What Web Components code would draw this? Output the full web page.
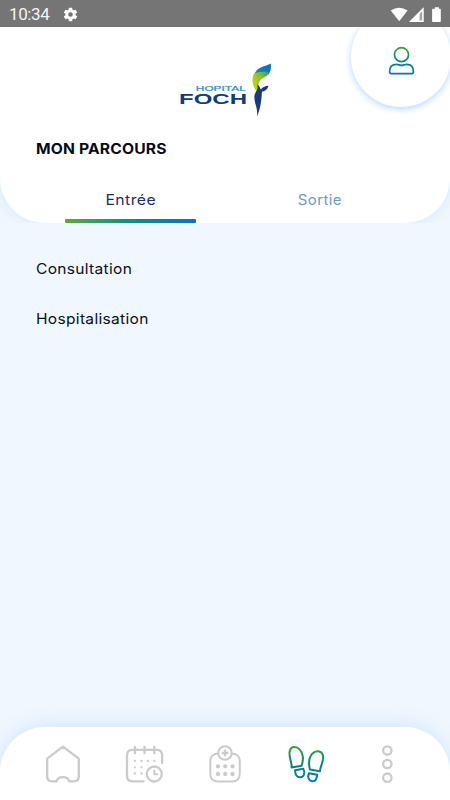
<!DOCTYPE html>
<html lang="fr">
<head>
<meta charset="utf-8">
<title>Mon parcours</title>
<style>
html,body{margin:0;height:100%}
body{font-family:Inter,"Open Sans",sans-serif;background:#f0f7fe;overflow:hidden}
</style>
</head>
<body>
<parcours-app></parcours-app>
<script>
const define = (name, html) => customElements.define(name, class extends HTMLElement {
  constructor() {
    super();
    const t = document.createElement('template');
    t.innerHTML = html;
    this.attachShadow({mode: 'open'}).append(t.content.cloneNode(true));
  }
});

define('status-bar', `
<style>
:host{display:flex;box-sizing:border-box;height:27px;background:#757575;color:#fff;align-items:center;padding:2px 8px 0 9px;font:17px/25px Roboto,sans-serif;position:relative;z-index:3}
span{letter-spacing:-.4px;width:52.500px;color:#f4f4f4}
.gap{flex:1}
svg{display:block}
</style>
<span>10:34</span>
<svg width="17" height="17" viewBox="0 0 24 24"><path fill="#fff" d="M19.14 12.94c.04-.3.06-.61.06-.94s-.02-.64-.07-.94l2.03-1.58a.49.49 0 0 0 .12-.61l-1.92-3.32a.49.49 0 0 0-.59-.22l-2.39.96a7 7 0 0 0-1.62-.94l-.36-2.54A.48.48 0 0 0 13.92 2.4h-3.84a.48.48 0 0 0-.48.41l-.36 2.54c-.59.24-1.13.57-1.62.94l-2.39-.96a.48.48 0 0 0-.59.22L2.72 8.87a.48.48 0 0 0 .12.61l2.03 1.58a7 7 0 0 0 0 1.88l-2.03 1.58a.49.49 0 0 0-.12.61l1.92 3.32c.12.22.37.29.59.22l2.39-.96c.5.38 1.03.7 1.62.94l.36 2.54c.05.24.24.41.48.41h3.84c.24 0 .44-.17.47-.41l.36-2.54a6.8 6.8 0 0 0 1.62-.94l2.39.96c.22.08.47 0 .59-.22l1.92-3.32a.48.48 0 0 0-.12-.61zM12 15.3a3.3 3.3 0 1 1 0-6.6 3.3 3.3 0 0 1 0 6.6z"/></svg>
<i class="gap"></i>
<svg width="52" height="16" viewBox="0 0 52 16"><path fill="#fff" d="M.8 3.6Q9 -2.2 17.6 3.6L9.2 14.2Z"/><path fill="#a5a5a5" d="M33.5.8V14.8H19.5Z"/><path fill="#fff" fill-rule="evenodd" d="M33.7.3V15H19Zm-1.5 4V13.5H29.6V6.9Z"/><path fill="#fff" d="M42.900 1.7h2V.2h4v1.5h1.2q.7 0 .7.7v11.8q0 .8-.7.8h-7.2q-.8 0-.8-.8V2.4q0-.7.8-.7z"/></svg>
`);

define('foch-logo', `
<style>:host{display:block;width:96px;height:56px}svg{display:block}text{font-family:"Liberation Sans",sans-serif}</style>
<svg width="96" height="56" viewBox="178 61.800 96 56">
<defs><linearGradient id="g" gradientUnits="userSpaceOnUse" x1="252" y1="82" x2="268" y2="72"><stop stop-color="#c3d60c"/><stop offset=".5" stop-color="#8dc32d"/><stop offset="1" stop-color="#39a35c"/></linearGradient>
<linearGradient id="b" gradientUnits="userSpaceOnUse" x1="254" y1="75" x2="269" y2="65"><stop stop-color="#0f9a9a"/><stop offset=".45" stop-color="#0c7fc4"/><stop offset="1" stop-color="#0870bb"/></linearGradient></defs>
<text x="195.800" y="91" font-size="6.900" fill="#238fc9" stroke="#238fc9" stroke-width=".2" textLength="50" lengthAdjust="spacingAndGlyphs">HOPITAL</text>
<text x="179" y="103.700" font-size="14" font-weight="bold" fill="#103b80" textLength="68" lengthAdjust="spacingAndGlyphs">FOCH</text>
<path fill="url(#b)" d="M270.700 63.300C265 66.500 259.500 66.300 256 71C254 73.500 253.300 76 253 78C258 76.500 261 78 268.500 74C271 71.500 271.200 67.500 270.700 63.300Z"/>
<path fill="url(#g)" d="M254.200 73.600C258.500 71 260.500 72 265 71.200C267.500 71 269 72.200 268.500 74C266.500 76.500 262 77.700 260.300 80C257.700 83.500 258.300 87.500 256.700 91C252.200 86.500 251.200 78.500 254.200 73.600Z"/>
<path fill="#173b7c" d="M257.200 83.800C259.500 86 260.300 87.500 260.700 89.300C263 86.500 265.500 85.800 268.400 85.500C267.500 89.500 265 90.900 262 91.400C261.500 99 260.800 108 257 116.300C258.200 107.500 254 103 254.400 96C254.700 91.500 258.800 90 257.200 83.800Z"/>
</svg>`);

define('profile-button', `
<style>
:host{display:flex;position:absolute;left:351px;top:-20px;width:100px;height:100px;border-radius:50%;background:#fff;box-shadow:0 2px 7px #b5d7ff;justify-content:center}
svg{display:block;margin-top:38px}
</style>
<svg width="28" height="32" viewBox="387 45 28 32" fill="none" stroke="url(#p)" stroke-width="1.7"><defs><linearGradient id="p" gradientUnits="userSpaceOnUse" x1="0" y1="47" x2="0" y2="74"><stop stop-color="#36a52e"/><stop offset=".55" stop-color="#07867e"/><stop offset="1" stop-color="#0874bd"/></linearGradient></defs>
<circle cx="401.500" cy="54.700" r="7"/><path d="M391.500 73.600Q389.600 73.600 389.600 71.700C389.600 66.500 392.800 64.400 396.500 64.400C398.500 64.400 399.700 65.400 401.600 65.400S404.700 64.400 406.700 64.400C410.400 64.400 413.400 66.500 413.400 71.700Q413.400 73.600 411.500 73.600Z"/></svg>`);

define('tab-item', `
<style>
:host{display:flex;flex-direction:column;align-items:center;width:131px;height:38px;color:#6d9dbe;font-size:14.5px;line-height:29px}
span{letter-spacing:.4px;height:34px;transform:translateX(.5px) scaleX(1.03)}
:host([active]){color:#1c2c71}
:host([active]) span{transform:translateX(.5px) scaleX(1.09)}
:host([active])::after{content:"";width:131px;height:4px;border-radius:1px;background:linear-gradient(90deg,#5cab36,#079188 50%,#0873c6)}
</style><span><slot></slot></span>`);

define('page-header', `
<style>
:host{display:block;position:relative;height:196px;clip-path:inset(0)}
.panel{height:196px;border-radius:0 0 45px 45px;background:#fff;box-shadow:0 0 16px #d3e8fd}
foch-logo{margin-left:178px;padding-top:35px}
h1{margin:20px 0 0 36px;font-size:14.300px;line-height:22px;font-weight:700;color:#050b18;letter-spacing:.15px;width:max-content;transform:scaleX(1.095);transform-origin:left}
nav{display:flex;gap:58px;padding:25px 0 0 65px}
</style>
<div class="panel">
<foch-logo></foch-logo>
<h1><slot name="title"></slot></h1>
<nav><slot></slot></nav>
<profile-button></profile-button>
</div>`);

define('list-row', `<style>:host{display:block;width:max-content;height:49.500px;font-size:14.500px;line-height:20px;color:#08101c;letter-spacing:.3px;transform:scaleX(1.07);transform-origin:left}</style><slot></slot>`);

define('bottom-nav', `
<style>
:host{display:flex;box-sizing:border-box;height:73.500px;border-radius:45px 45px 0 0;background:#fff;box-shadow:0 -1px 20px #cbe5ff;padding:15.500px 0 0 43px;gap:41px}
svg{display:block;flex:none;fill:none;stroke:#cbcbcb;stroke-width:2.300;stroke-linejoin:round;stroke-linecap:round}
</style>
<svg width="40" height="44" viewBox="43 742 40 44"><path d="M62.900 746.600L78.800 758.600V776.500Q78.800 781.300 74 781.300H69.300C67.500 775.700 58.300 775.700 56.500 781.300H52Q47.200 781.300 47.200 776.500V758.600Z"/></svg>
<svg width="40" height="44" viewBox="124 742 40 44"><path d="M143.500 781.300H132.500Q127 781.300 127 775.800V755.300Q127 749.900 132.500 749.900H156.800Q162.100 749.900 162.100 755.300V763M135 746.800V753.200M144.500 746.800V753.200M154.300 746.800V753.200"/><circle cx="154.300" cy="774" r="7.500"/><path stroke-width="2" d="M154.300 770.500V774.300H157.300"/><path stroke-width="2.300" d="M134.800 761h.01M141.500 761h.01M147.800 761h.01M154.200 761h.01M134.800 767.300h.01M141.500 767.300h.01M134.800 773.500h.01M141.500 773.500h.01"/></svg>
<svg width="40" height="44" viewBox="205 742 40 44"><path stroke-width="2" d="M217.500 753.800C213 753.800 210.300 757 210.300 761V773.500Q210.300 781.500 218 781.500H232Q239.800 781.500 239.800 773.500V761C239.800 757 237 753.800 232.500 753.800"/><circle cx="225" cy="753" r="6.700" stroke-width="2"/><path stroke-linecap="butt" stroke-width="2.300" d="M225 749.700V756.300M221.700 753H228.300"/><path stroke-width="4.300" d="M218 766.300h.01M225.200 766.300h.01M232.500 766.300h.01M218 774h.01M225.200 774h.01M232.500 774h.01"/></svg>
<svg width="40" height="44" viewBox="286 742 40 44" style="stroke:url(#f);stroke-width:2"><defs><linearGradient id="f" gradientUnits="userSpaceOnUse" x1="0" y1="746" x2="0" y2="782"><stop stop-color="#36a52e"/><stop offset=".55" stop-color="#07867e"/><stop offset="1" stop-color="#0874bd"/></linearGradient></defs>
<path d="M291.600 767.500C292 761 288.400 757.500 289.700 751.200C290.800 746.100 295.900 745.700 299.500 749.400C303.500 753.800 303.400 760.300 301.600 765.700Z"/><path d="M295 770.300L303.300 768.700C305.300 773 304 777 300.500 777.300C296.600 777.600 295.300 774.500 295 770.300Z"/>
<path d="M309.900 769.400C308.500 763.700 308.800 757.700 312.300 753.700C315.800 750 321.400 750.500 322.800 755C324.500 761.500 320 765.500 320 771.300Z"/><path d="M309 773.300L317.200 774.800C316.900 779.200 315.200 781.700 312 781.200C308.200 780.500 307.400 776.700 309 773.300Z"/></svg>
<svg width="40" height="44" viewBox="367 742 40 44"><circle cx="387.300" cy="750.500" r="4.200"/><circle cx="387.300" cy="764" r="4.200"/><circle cx="387.300" cy="777.700" r="4.200"/></svg>`);

define('parcours-app', `
<style>
:host{display:flex;flex-direction:column;width:450px;height:800px;background:#f0f7fe;overflow:hidden}
main{flex:1;padding:36px 36px 0}
</style>
<status-bar></status-bar>
<page-header><span slot="title">MON PARCOURS</span><tab-item active>Entrée</tab-item><tab-item>Sortie</tab-item></page-header>
<main><list-row>Consultation</list-row><list-row>Hospitalisation</list-row></main>
<bottom-nav></bottom-nav>`);
</script>
</body>
</html>
